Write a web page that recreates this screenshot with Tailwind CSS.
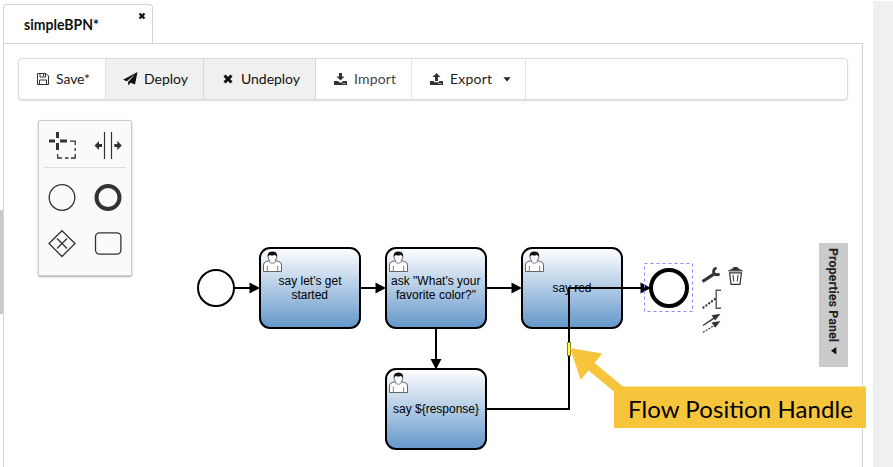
<!DOCTYPE html>
<html lang="en">
<head>
<meta charset="utf-8">
<title>simpleBPN</title>
<script src="https://cdn.jsdelivr.net/npm/@tailwindcss/browser@4"></script>
</head>
<body class="bg-white overflow-hidden font-['Lato',sans-serif] text-[#111]">
<div class="relative flex h-[467px] w-[893px] pl-[3px]">
  <div class="absolute left-0 top-[210px] h-[104px] w-[3px] bg-[#c9c9c9]"></div>
  <div class="flex w-[860px] flex-col pt-1">
    <div class="relative z-10 -mb-px flex h-10 w-[150px] items-center justify-between rounded-t-[4px] border border-b-0 border-[#d4d4d5] bg-white pl-5 pr-[6px]">
      <span class="text-[14.5px] font-bold leading-5"><svg class="block" width="80" height="20"><text x="0" y="15" textLength="75" lengthAdjust="spacingAndGlyphs" fill="#111">simpleBPN*</text></svg></span>
      <svg class="mb-[17px]" width="8" height="8" viewBox="0 0 8 8"><path d="M1.5 1.5 6.5 6.5M6.5 1.5 1.5 6.5" stroke="#111" stroke-width="2.3"/></svg>
      <i class="absolute inset-x-0 bottom-0 h-px bg-[#d4d4d5]"></i>
    </div>
    <main class="flex-1 border border-b-0 border-[#d4d4d5] px-[14px] pt-[14px]">
      <nav class="flex h-[42px] w-[830px] overflow-hidden rounded-[4px] border border-[#dadbdc] bg-white text-[14px] shadow-[0_1px_2px_rgba(34,36,38,0.15)]">
        <div class="flex w-[87px] items-center border-r border-[#e3e3e4] pl-[18px]">
          <svg width="12" height="12" viewBox="0 0 12 12" fill="none" stroke="#333"><path d="M.5.5H9L11.5 3V11.5H.5ZM3 .5V4H8.5V.5M2.5 11.5V7H9.5V11.5M6.5 1V3"/></svg>
          <svg class="ml-[7px]" width="38" height="20"><text x="0" y="15" textLength="34" fill="#222">Save*</text></svg>
        </div>
        <div class="flex w-[98px] items-center border-r border-[#d8d8d9] bg-[#f0f0f0] pl-[17px]">
          <svg width="15" height="14" viewBox="0 0 15 14"><path d="M14.5 0 12 12.5 7.5 10.7 5.5 13.5 5 10 12.5 2 3.8 9.3 0 7.7Z" fill="#111"/></svg>
          <svg class="ml-[6px]" width="48" height="20"><text x="0" y="15" textLength="44" fill="#111">Deploy</text></svg>
        </div>
        <div class="flex w-[112px] items-center border-r border-[#d8d8d9] bg-[#f0f0f0] pl-[19px]">
          <svg width="10" height="10" viewBox="0 0 10 10"><path d="M1.5 1.5 8.5 8.5M8.5 1.5 1.5 8.5" stroke="#111" stroke-width="3.1"/></svg>
          <svg class="ml-[8px]" width="64" height="20"><text x="0" y="15" textLength="59" fill="#111">Undeploy</text></svg>
        </div>
        <div class="flex w-[96px] items-center border-r border-[#e3e3e4] pl-[18px]">
          <svg width="13" height="12" viewBox="0 0 13 12"><path d="M5 0H8V3.5H10.5L6.5 7.5 2.5 3.5H5Z M0 8H3.8L6.5 10 9.2 8H13V12H0Z" fill="#333"/><path d="M8.5 10.5h1M10.5 10.5h1" stroke="#fff"/></svg>
          <svg class="ml-[7px]" width="46" height="20"><text x="0" y="15" textLength="42" fill="#444">Import</text></svg>
        </div>
        <div class="flex w-[114px] items-center border-r border-[#e3e3e4] pl-[18px]">
          <svg width="13" height="12" viewBox="0 0 13 12"><path d="M5 8H8V4H10.5L6.5 0 2.5 4H5Z M0 8H4V9.2H9V8H13V12H0Z" fill="#333"/><path d="M8.5 10.5h1M10.5 10.5h1" stroke="#fff"/></svg>
          <svg class="ml-[7px]" width="46" height="20"><text x="0" y="15" textLength="42" fill="#222">Export</text></svg>
          <svg class="ml-[7px]" width="8" height="5" viewBox="0 0 8 5"><path d="M.4.3H7.6L4 4.5Z" fill="#222"/></svg>
        </div>
      </nav>
    </main>
  </div>
  <div class="ml-[10px] mt-px h-[466px] w-5 bg-[#f0f0f0]"></div>

  <svg class="absolute left-0 top-0" width="893" height="467" viewBox="0 0 893 467" font-family="'Liberation Sans',Arial,sans-serif" font-size="12">
    <defs>
      <linearGradient id="task" x1="0" y1="0" x2="0" y2="1"><stop offset="0" stop-color="#fff"/><stop offset="1" stop-color="#6497ca"/></linearGradient>
      <g id="user">
        <path d="M3.5 23.5V17Q3.6 14.2 6 13.6L9.6 12.5Q8 11 8 8.5Q8 4.5 12.4 4.5T16.8 8.5Q16.8 11 15.2 12.5L18.8 13.6Q21.4 14.2 21.5 17V23.5Z" fill="#fff" stroke="#555" stroke-width=".9"/>
        <path d="M9.3 12.8Q9.4 15.3 12.4 15.3T15.5 12.8M7.3 17.8V23.5M17.7 17.8V23.5" fill="none" stroke="#666" stroke-width=".8"/>
        <path d="M7.9 8.8Q7 3.7 12.4 3.5Q17.8 3.7 16.9 8.8Q15.8 7.2 14.5 7Q12 8.2 9.8 7Q8.6 7.4 7.9 8.8Z" fill="#111"/>
      </g>
      <g id="box"><rect width="100" height="80" rx="10" fill="url(#task)" stroke="#000" stroke-width="2"/><use href="#user"/></g>
    </defs>
    <circle cx="216" cy="288" r="18" fill="#fff" stroke="#000" stroke-width="2"/>
    <use href="#box" x="260" y="248"/>
    <use href="#box" x="386" y="248"/>
    <use href="#box" x="522" y="248"/>
    <use href="#box" x="386" y="369"/>
    <g fill="#000">
      <text x="278.5" y="285" textLength="63">say let's get</text>
      <text x="291.5" y="299" textLength="36.5">started</text>
      <text x="391" y="285" textLength="89.5">ask "What's your</text>
      <text x="396" y="299" textLength="80">favorite color?"</text>
      <text x="552.5" y="292" textLength="39">say red</text>
      <text x="393" y="413" textLength="86">say ${response}</text>
    </g>
    <g fill="none" stroke="#000" stroke-width="2">
      <path d="M234 288H252M360 288H378M486 288H514M436 328V361M486 409H569V288H642"/>
      <circle cx="669" cy="288" r="18" fill="#fff" stroke-width="4"/>
    </g>
    <path d="M249.5 282.5 260 288 249.5 293.5ZM375.5 282.5 386 288 375.5 293.5ZM511.5 282.5 522 288 511.5 293.5ZM640.5 282.5 651 288 640.5 293.5ZM430.5 359 436 369.5 441.5 359Z"/>
    <rect x="644.5" y="263.5" width="48" height="48" fill="none" stroke="#8888ff" stroke-dasharray="3 3"/>
    <rect x="567.5" y="342.5" width="3" height="13" fill="#ffff33" stroke="#8a7a20"/>
    <path d="M702.5 281.5 713.5 274.3" stroke="#333" stroke-width="3.2"/>
    <path d="M716.6 268.2Q712.8 269 713.8 273Q716 276.2 719.6 273.8" fill="none" stroke="#333" stroke-width="2.8"/>
    <g fill="none" stroke="#333">
      <path d="M728.3 270.8H742.7" stroke-width="1.2"/>
      <path d="M729.5 270 733.3 268V266.9H737.7V268L741.5 270Z" fill="#333" stroke="none"/>
      <path d="M729.6 272.8H741.4L740 284.3H731Z" stroke-width="1.2"/>
      <path d="M733 274.8 733.8 281.5M738 274.8 737.2 281.5"/>
      <path d="M721 290.3H716.2V308.3H721" stroke="#555" stroke-width="1.4"/>
      <path d="M703.5 307.5 715 299" stroke-width="2.3" stroke-linecap="round" stroke-dasharray="0.1 3.4"/>
      <path d="M703 325.5 714 318.2" stroke-width="1.4"/>
      <path d="M703 332.5 714 325.5" stroke-width="1.2" stroke-dasharray="2 1.2"/>
    </g>
    <path d="M720.5 313.8 711.5 315.2 715.2 320.6ZM720.5 321 711.5 322.5 715.2 327.8Z" fill="#333"/>
    <g transform="translate(819 243)"><rect width="29" height="124" fill="#cbcbcb"/><text transform="translate(10 5) rotate(90)" font-family="'Roboto',sans-serif" font-size="13.5" font-weight="700" textLength="94" lengthAdjust="spacingAndGlyphs" fill="#222">Properties Panel</text><path d="M17.3 104V111.5L12 107.8Z" fill="#111"/></g>
    <path d="M570 348 602.3 353.5 594.5 363 623 386.5H866V428H614V391.5L588.5 370.5 580.7 379.7Z" fill="#f6c53c"/>
    <text x="628" y="418" font-family="Lato,sans-serif" font-size="24" textLength="225" fill="#000">Flow Position Handle</text>
  </svg>

  <div class="absolute left-[38px] top-[120px] h-[156px] w-[94px] rounded-[2px] border border-[#ccc] bg-[#fafafa] shadow-[0_1px_2px_#aaa]">
    <svg width="92" height="154" viewBox="39 121 92 154" fill="none" stroke="#333">
      <path d="M57.5 132V138M57.5 143V150M49 141H55M60 141H67" stroke-width="3"/>
      <path d="M70 141.2H75.2V145M75.2 148V151M75.2 154V158H71M68.5 158H65M62 158H57.7V154" stroke-width="1.3"/>
      <path d="M104.5 132V159M111.5 132V159" stroke-width="1.2"/>
      <path d="M94.5 145.5 99 141V144H102V147H99V150ZM121.8 145.5 117.3 141V144H114.3V147H117.3V150Z" fill="#333" stroke="none"/>
      <path d="M44 167.5H126" stroke="#ddd"/>
      <circle cx="62" cy="197.5" r="12.8" stroke-width="1.3"/>
      <circle cx="108" cy="197.5" r="11.5" stroke-width="4"/>
      <path d="M62 230.7 75 243.5 62 256.5 49 243.5ZM57 238.5 67 248.5M67 238.5 57 248.5" stroke-width="1.3"/>
      <rect x="95.5" y="232.8" width="25.4" height="21.3" rx="4" stroke-width="1.3"/>
    </svg>
  </div>
</div>
</body>
</html>
